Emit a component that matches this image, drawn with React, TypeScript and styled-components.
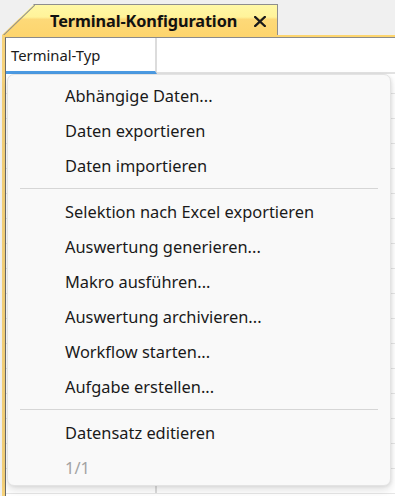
import React from 'react';
import styled, { createGlobalStyle } from 'styled-components';

const GlobalStyle = createGlobalStyle`
  html, body {
    margin: 0;
    padding: 0;
    background: #f0f0f0;
  }
  body {
    font-family: 'Noto Sans', 'Open Sans', sans-serif;
  }
`;

const menuGroups: { label: string; disabled?: boolean }[][] = [
  [{ label: 'Abhängige Daten...' }, { label: 'Daten exportieren' }, { label: 'Daten importieren' }],
  [
    { label: 'Selektion nach Excel exportieren' },
    { label: 'Auswertung generieren...' },
    { label: 'Makro ausführen...' },
    { label: 'Auswertung archivieren...' },
    { label: 'Workflow starten...' },
    { label: 'Aufgabe erstellen...' },
  ],
  [{ label: 'Datensatz editieren' }, { label: '1/1', disabled: true }],
];

const App: React.FC = () => {
  return (
    <Screen>
      <GlobalStyle />
      <TabStrip>
        <Tab>
          <TabTitle>Terminal-Konfiguration</TabTitle>
          <CloseIcon viewBox='0 0 12 11'>
            <path d='M1.2 1 L10.8 10 M10.8 1 L1.2 10' stroke='#1a1a1a' strokeWidth='2.3' strokeLinecap='square' />
          </CloseIcon>
        </Tab>
      </TabStrip>

      <Panel>
        <Grid>
          <HeaderRow>
            <HeaderCell>Terminal-Typ</HeaderCell>
            <HeaderFill />
          </HeaderRow>
          {Array.from({ length: 17 }).map((_, i) => (
            <Row key={i} first={i === 0}>
              <Cell />
              <CellFill />
            </Row>
          ))}
        </Grid>

        <Menu>
          {menuGroups.map((group, gi) => (
            <React.Fragment key={gi}>
              {gi > 0 && <Separator />}
              {group.map((item) => (
                <MenuItem key={item.label} disabled={item.disabled}>
                  {item.label}
                </MenuItem>
              ))}
            </React.Fragment>
          ))}
        </Menu>
      </Panel>
    </Screen>
  );
};

const Screen = styled.div`
  width: 395px;
  height: 496px;
  overflow: hidden;
  background: #f0f0f0;
  display: flex;
  flex-direction: column;
`;

const TabStrip = styled.div`
  height: 31px;
  padding-top: 4px;
  display: flex;
  align-items: flex-end;
  padding-left: 2px;
`;

const Tab = styled.div`
  position: relative;
  width: 276px;
  height: 31px;
  box-sizing: border-box;
  display: flex;
  align-items: center;
  padding-left: 48px;
  padding-top: 1px;
  gap: 17px;
  background: linear-gradient(180deg, #fff8a6 0%, #fff39a 40%, #fdd978 48%, #fdd56e 100%);
  clip-path: polygon(32px 0, 100% 0, 100% 100%, 0 100%);
  border-top: 1px solid #8e8e8e;
  border-right: 1px solid #8e8e8e;

  &::before {
    content: '';
    position: absolute;
    left: 0;
    top: 0;
    width: 45px;
    height: 1px;
    background: #8e8e8e;
    transform-origin: 0 0;
    transform: translate(0, 31px) rotate(-44deg);
  }
`;

const TabTitle = styled.span`
  font-family: 'Noto Sans', sans-serif;
  font-weight: 700;
  font-size: 16.3px;
  color: #111;
  letter-spacing: -0.1px;
`;

const CloseIcon = styled.svg`
  width: 12px;
  height: 11px;
  margin-top: 2px;
`;

const Panel = styled.div`
  position: relative;
  flex: 1;
  margin-left: 2px;
  border-left: 3px solid #f6d27a;
  border-top: 2px solid #fdd56e;
  background: #fff;
`;

const Grid = styled.div`
  height: 100%;
  border-left: 1px solid #6a6a6a;
  border-top: 1px solid #8a8a8a;
  box-sizing: border-box;
`;

const HeaderRow = styled.div`
  display: flex;
  height: 36px;
  box-sizing: border-box;
  border-bottom: 2px solid #e2e2e2;
`;

const HeaderCell = styled.div`
  width: 151px;
  box-sizing: border-box;
  padding-left: 5px;
  padding-top: 7px;
  font-size: 14.8px;
  color: #1b1b1b;
  border-right: 2px solid #dcdcdc;
  border-bottom: 3px solid #4c9be3;
  margin-bottom: -2px;
`;

const HeaderFill = styled.div`
  flex: 1;
`;

const Row = styled.div<{ first?: boolean }>`
  display: flex;
  height: ${(p) => (p.first ? '20px' : '25px')};
  border-bottom: 1px solid #e6e6e6;
  box-sizing: border-box;
`;

const Cell = styled.div`
  width: 151px;
  border-right: 2px solid #dcdcdc;
  box-sizing: border-box;
`;

const CellFill = styled.div`
  flex: 1;
`;

const Menu = styled.div`
  position: absolute;
  left: 2px;
  top: 37px;
  width: 384px;
  box-sizing: border-box;
  padding: 3px 0 0;
  background: #f9f9f9;
  border: 1px solid #e3e3e3;
  border-radius: 7px;
  box-shadow: 0 4px 8px rgba(0, 0, 0, 0.12), 1px 1px 3px rgba(0, 0, 0, 0.06);
  display: flex;
  flex-direction: column;
`;

const MenuItem = styled.div<{ disabled?: boolean }>`
  height: 35px;
  line-height: 35px;
  padding-left: 57px;
  font-size: 16.4px;
  color: ${(p) => (p.disabled ? '#a3a3a3' : '#1a1a1a')};
`;

const Separator = styled.div`
  height: 1px;
  margin: 5px 12px 5px 12px;
  background: #d6d6d6;
`;

export default App;
